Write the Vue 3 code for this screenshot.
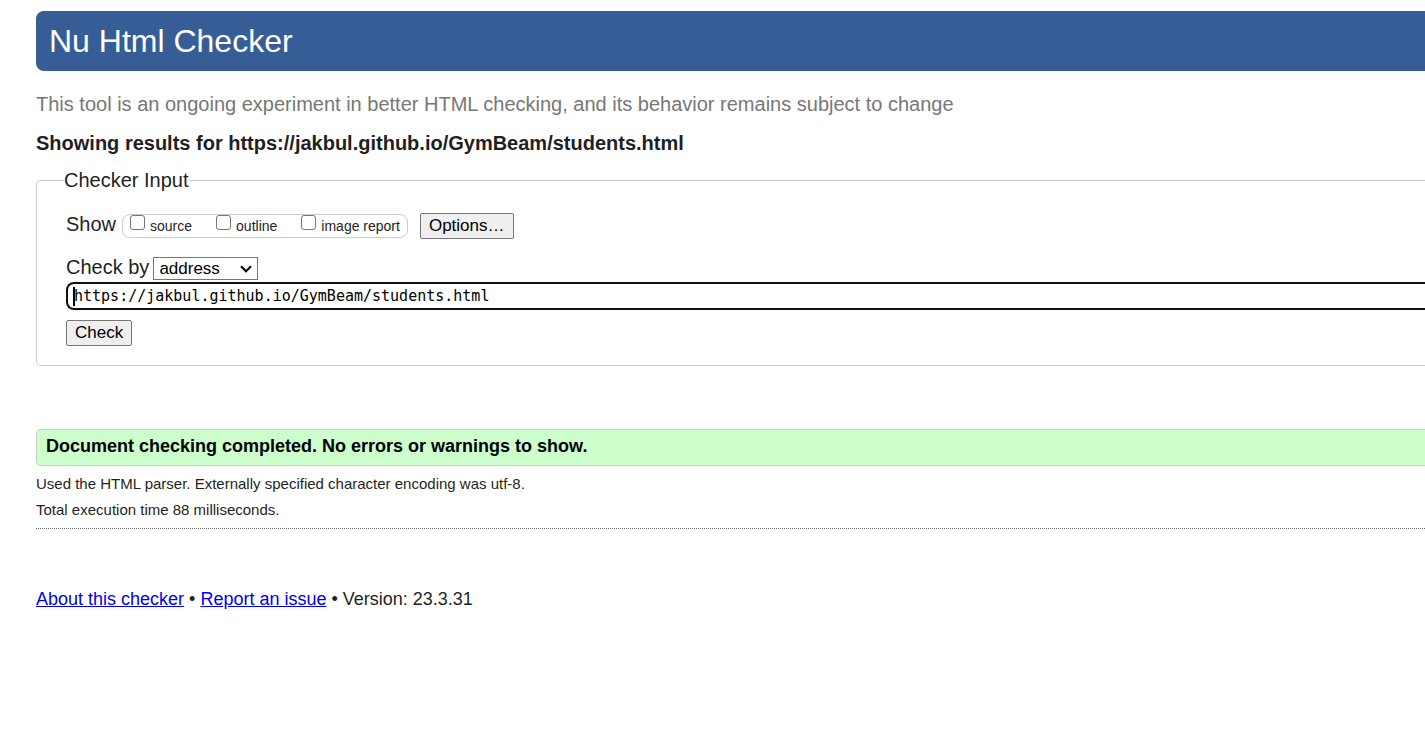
<script setup>
import { ref } from 'vue'

const reports = ref([
  { id: 'source', label: 'source', checked: false },
  { id: 'outline', label: 'outline', checked: false },
  { id: 'image-report', label: 'image report', checked: false },
])
const method = ref('address')
const address = ref('https://jakbul.github.io/GymBeam/students.html')
</script>

<template>
  <div class="page">
    <header class="banner"><h1>Nu Html Checker</h1></header>
    <p class="note">This tool is an ongoing experiment in better HTML checking, and its behavior remains subject to change</p>
    <h2 class="heading">Showing results for https://jakbul.github.io/GymBeam/students.html</h2>

    <form @submit.prevent>
      <fieldset class="panel">
        <legend>Checker Input</legend>
        <div class="show-row">
          <span class="show-label">Show</span>
          <div class="reports">
            <label v-for="item in reports" :key="item.id" :for="item.id">
              <input :id="item.id" v-model="item.checked" type="checkbox">
              <span>{{ item.label }}</span>
            </label>
          </div>
          <button type="button" class="btn">Options…</button>
        </div>
        <div class="method-row">
          <label for="method">Check by</label>
          <div class="select-wrap">
            <select id="method" v-model="method">
              <option value="address">address</option>
              <option value="upload">file upload</option>
              <option value="text">text input</option>
            </select>
            <svg class="chevron" width="12" height="8" viewBox="0 0 12 8" aria-hidden="true">
              <path d="M1 1.3 L6 6.3 L11 1.3" fill="none" stroke="#000" stroke-width="2" />
            </svg>
          </div>
        </div>
        <div class="address-wrap">
          <input id="address" v-model="address" type="text" aria-label="Address" spellcheck="false">
          <span class="caret"></span>
        </div>
        <button type="submit" class="btn">Check</button>
      </fieldset>
    </form>

    <p class="success">Document checking completed. No errors or warnings to show.</p>
    <div class="stats">
      <p>Used the HTML parser. Externally specified character encoding was utf-8.</p>
      <p>Total execution time 88 milliseconds.</p>
    </div>
    <footer>
      <a href="#about">About this checker</a> • <a href="#issue">Report an issue</a> • Version: 23.3.31
    </footer>
  </div>
</template>

<style>
body {
  background: #fff;
}
</style>

<style scoped>
.page {
  padding: 11px 0 0 36px;
  font-family: "Liberation Sans", Arial, sans-serif;
  font-size: 20px;
  line-height: 24px;
  color: #1f1f23;
}

h1,
h2,
p {
  margin: 0;
}

.banner {
  padding: 10px 13px;
  background: #365d95;
  border-radius: 8px 0 0 8px;
}

h1 {
  font-size: 32px;
  line-height: 40px;
  font-weight: 400;
  color: #fff;
}

.note {
  margin-top: 21px;
  color: #777;
}

.heading {
  margin-top: 15px;
  font-size: 20px;
  line-height: 24px;
}

.panel {
  min-width: 0;
  margin: 13px 0 0;
  padding: 17px 0 19px 29px;
  border: 1px solid #ccc;
  border-right: 0;
  border-radius: 5px 0 0 5px;
}

legend {
  margin-left: -2px;
  padding: 0;
}

.show-row {
  display: flex;
  align-items: flex-end;
}

.show-label {
  line-height: 30px;
}

.reports {
  display: flex;
  gap: 24px;
  margin: 0 12px 1px 6px;
  padding: 0 7px;
  border: 1px solid #ccc;
  border-radius: 8px;
}

.reports label {
  display: flex;
  gap: 5px;
  font-size: 14px;
  line-height: 22px;
}

.reports input {
  appearance: none;
  box-sizing: border-box;
  width: 15px;
  height: 15px;
  margin: 0;
  border: 1px solid #767676;
  border-radius: 3px;
  background: #fff;
}

.btn {
  height: 26px;
  padding: 0 8px;
  font: 17px/22px "Liberation Sans", Arial, sans-serif;
  color: #000;
  background: #efefef;
  border: 1px solid #767676;
  border-radius: 2px;
}

.method-row {
  display: flex;
  align-items: flex-end;
  gap: 4px;
  margin-top: 16px;
}

.method-row label {
  line-height: 25px;
}

.select-wrap {
  position: relative;
  display: flex;
}

select {
  appearance: none;
  height: 23px;
  width: 105px;
  padding: 0 5px;
  font: 17px/21px "Liberation Sans", Arial, sans-serif;
  color: #000;
  background: #fff;
  border: 1px solid #767676;
  border-radius: 0;
}

.chevron {
  position: absolute;
  right: 6px;
  top: 8px;
  pointer-events: none;
}

.address-wrap {
  position: relative;
  margin: 2px 0 9px;
}

.address-wrap input {
  display: block;
  box-sizing: border-box;
  width: 100%;
  height: 28px;
  padding: 0 6px;
  font: 15px/24px "DejaVu Sans Mono", monospace;
  color: #000;
  background: #fff;
  border: 2px solid #101010;
  border-right: 0;
  border-radius: 8px 0 0 8px;
  outline: 0;
}

.caret {
  position: absolute;
  left: 7px;
  top: 5px;
  width: 2px;
  height: 19px;
  background: #000;
}

.success {
  margin-top: 63px;
  padding: 4px 9px 7px;
  font-size: 18px;
  font-weight: 700;
  color: #000;
  background: #cfc;
  border: 1px solid #ccc;
  border-right: 0;
  border-radius: 5px 0 0 5px;
}

.stats {
  padding: 5px 0;
  font-size: 15px;
  line-height: 26px;
  border-bottom: 1px dotted #666;
}

footer {
  margin-top: 58px;
  font-size: 18px;
}
</style>
